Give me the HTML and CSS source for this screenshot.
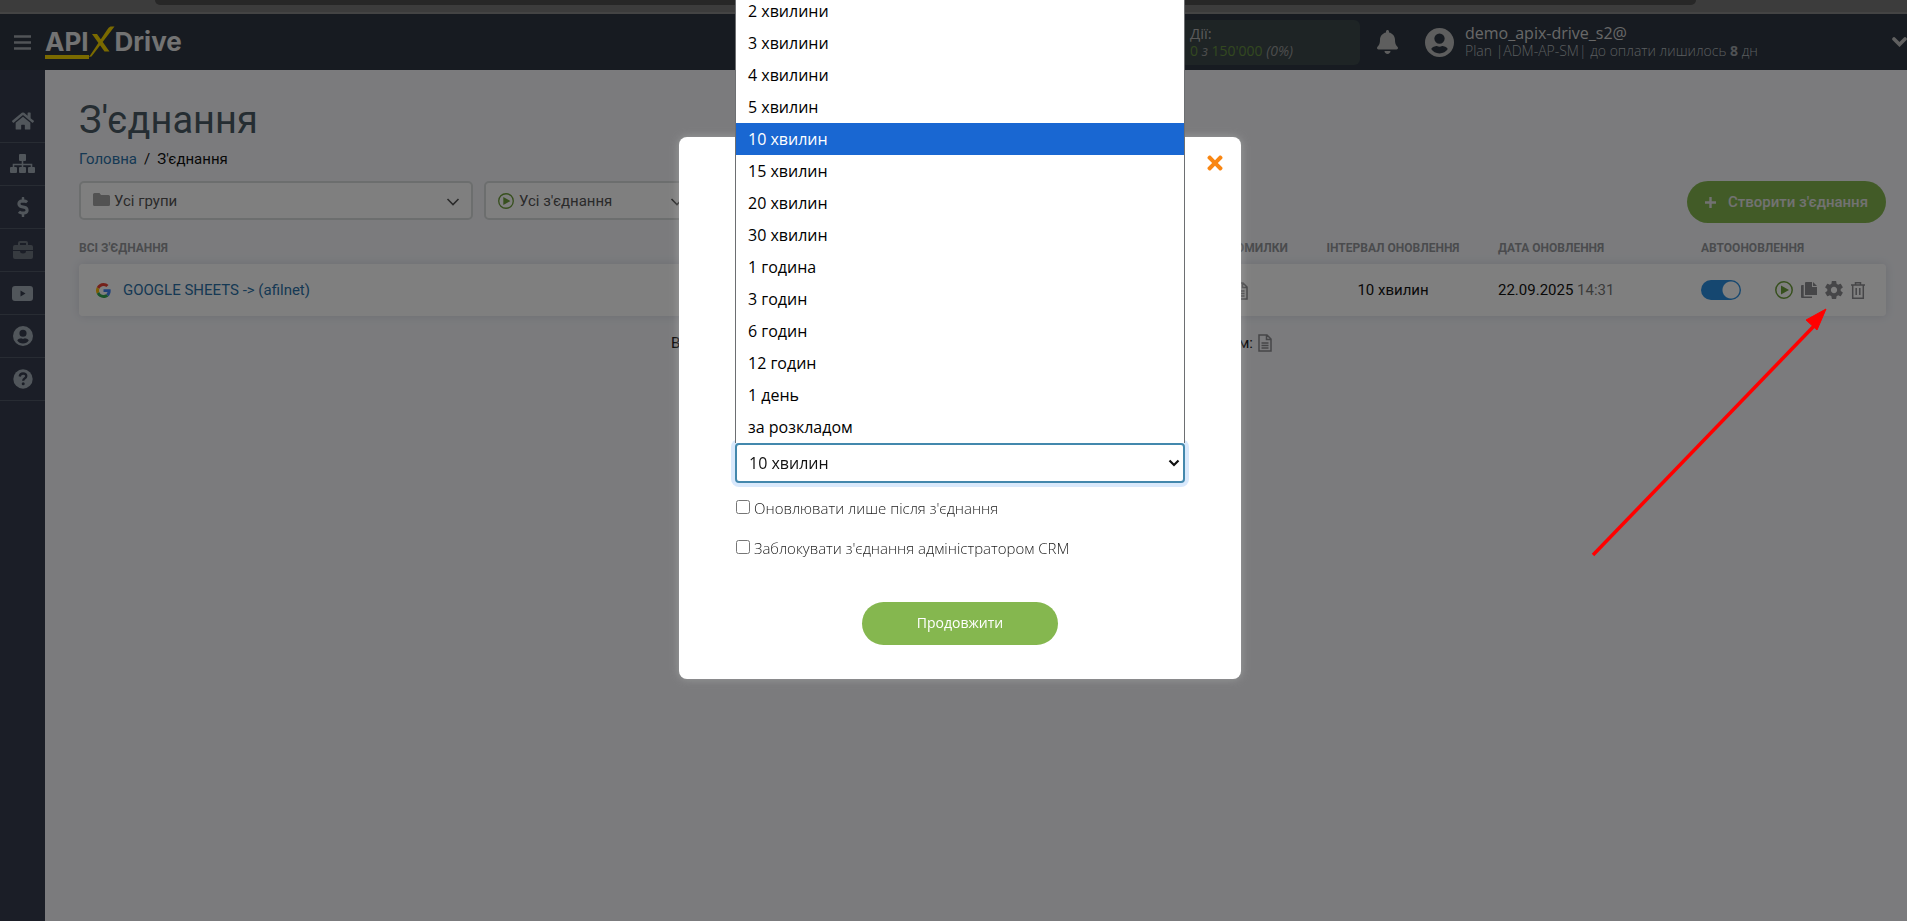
FILE: index.html
```html
<!DOCTYPE html>
<html lang="uk">
<head>
<meta charset="utf-8">
<title>З'єднання — ApiX-Drive</title>
<link rel="stylesheet" href="styles.css">
</head>
<body class="page">
<svg width="0" height="0" class="defs" aria-hidden="true">
  <symbol id="user" viewBox="0 0 28 28"><path fill-rule="evenodd" d="M14 0a14 14 0 1 1 0 28a14 14 0 1 1 0-28zM14 5.200a5 5 0 1 0 0 10a5 5 0 1 0 0-10zM14 24.500c3.600 0 6.300-1.600 8-4.200c-.6-2-4-3-5.500-3c-.8.500-1.700.700-2.500.700s-1.700-.2-2.500-.7c-1.500 0-4.900 1-5.500 3c1.700 2.600 4.400 4.200 8 4.200z"/></symbol>
  <symbol id="play" viewBox="0 0 18 18"><circle cx="9" cy="9" r="8.200" fill="none" stroke="currentColor" stroke-width="1.500"/><path d="M6 4.500l8 4.500l-8 4.500z"/></symbol>
  <symbol id="file" viewBox="0 0 14 18"><path d="M1 1h8l4 4v12h-12zM8.500 1v4.500h4.500M3.500 9h7M3.500 11.500h7M3.500 14h7" fill="none" stroke="currentColor" stroke-width="1.500"/></symbol>
  <symbol id="chev" viewBox="0 0 14 8"><path d="M1.500 1l5.500 5.500l5.500-5.500" fill="none" stroke="currentColor" stroke-width="1.600"/></symbol>
</svg>

<div class="browser-strip"><div class="address-bar"></div></div>

<header class="header">
  <button class="menu-button" type="button" aria-label="Меню">
    <svg width="17" height="15" viewBox="0 0 17 15"><path d="M0 1.500h17M0 7.500h17M0 13.500h17" stroke="currentColor" stroke-width="2.400"/></svg>
  </button>
  <a class="logo" href="#">
    <span class="logo-api">API</span>
    <svg class="logo-x" width="26" height="32" viewBox="0 0 26 32"><path d="M0 31l18-27q1.500-3 3.500-3.500h4l-23 30zM3 8h5l12.500 17.500h-5z" fill="currentColor"/></svg>
    <span class="logo-drive">Drive</span>
  </a>
  <div class="stats">
    <span class="stats-title">Дії:</span>
    <span class="stats-line"><span class="stats-num">0</span> <i>з</i> <span class="stats-num">150'000</span> <i>(0%)</i></span>
  </div>
  <button class="bell" type="button" aria-label="Сповіщення">
    <svg width="21" height="24" viewBox="0 0 448 512"><path fill="currentColor" d="M224 512c35.320 0 63.970-28.650 63.970-64H160.030c0 35.350 28.650 64 63.970 64zm215.390-149.710c-19.320-20.760-55.470-51.990-55.470-154.290 0-77.700-54.480-139.900-127.940-155.160V32c0-17.670-14.320-32-31.980-32s-31.980 14.330-31.980 32v20.840C118.560 68.100 64.080 130.300 64.080 208c0 102.300-36.150 133.530-55.470 154.290-6 6.450-8.660 14.160-8.610 21.710.11 16.400 12.980 32 32.100 32h383.800c19.120 0 32-15.600 32.100-32 .05-7.550-2.610-15.270-8.610-21.710z"/></svg>
  </button>
  <div class="account">
    <svg class="avatar" width="29" height="29" fill="currentColor"><use href="#user"/></svg>
    <div class="account-text">
      <span class="account-name">demo_apix-drive_s2@</span>
      <span class="account-plan">Plan |ADM-AP-SM| до оплати лишилось <b class="days">8</b> дн</span>
    </div>
    <svg class="account-more" width="15" height="10" viewBox="0 0 15 10"><path d="M2 2l5.500 5.500l5.500-5.500" fill="none" stroke="currentColor" stroke-width="3.600" stroke-linecap="round"/></svg>
  </div>
</header>

<div class="layout">
  <nav class="sidebar">
    <a class="side-item" href="#" aria-label="Головна"><svg width="22" height="20" viewBox="0 0 576 512"><path d="M280.370 148.260L96 300.110V464a16 16 0 0 0 16 16l112.060-.29a16 16 0 0 0 15.920-16V368a16 16 0 0 1 16-16h64a16 16 0 0 1 16 16v95.640a16 16 0 0 0 16 16.050L464 480a16 16 0 0 0 16-16V300L295.670 148.260a12.190 12.190 0 0 0-15.300 0zM571.600 251.470L488 182.560V44.050a12 12 0 0 0-12-12h-56a12 12 0 0 0-12 12v72.610L318.470 43a48 48 0 0 0-61 0L4.340 251.470a12 12 0 0 0-1.600 16.900l25.500 31A12 12 0 0 0 45.150 301l235.220-193.740a12.190 12.190 0 0 1 15.300 0L530.900 301a12 12 0 0 0 16.900-1.600l25.500-31a12 12 0 0 0-1.700-16.930z"/></svg></a>
    <a class="side-item" href="#" aria-label="З'єднання"><svg width="25" height="20" viewBox="0 0 25 20"><rect x="9" y="0" width="7" height="7" rx="1"/><rect x="0" y="13" width="7" height="6" rx="1"/><rect x="9" y="13" width="7" height="6" rx="1"/><rect x="18" y="13" width="7" height="6" rx="1"/><path d="M12.500 6v8M3.500 14v-3.500h18v3.500" fill="none" stroke="currentColor" stroke-width="1.600"/></svg></a>
    <a class="side-item" href="#" aria-label="Оплата"><svg width="12" height="20" viewBox="0 0 288 512"><path d="M209.200 233.400l-108-31.600C88.700 198.200 80 186.500 80 173.500c0-16.300 13.200-29.500 29.500-29.500h66.300c12.200 0 24.200 3.700 34.200 10.500 6.100 4.100 14.300 3.100 19.500-2l34.800-34c7.100-6.900 6.100-18.400-1.800-24.500C238 74.800 207.400 64.100 176 64V16c0-8.800-7.200-16-16-16h-32c-8.800 0-16 7.200-16 16v48h-2.500C45.800 64-5.400 118.700.5 183.600c4.200 46.100 39.400 83.600 83.800 96.600l102.500 30c12.500 3.700 21.200 15.300 21.200 28.300 0 16.300-13.200 29.500-29.500 29.500h-66.300C100 368 88 364.300 78 357.500c-6.100-4.100-14.300-3.100-19.500 2l-34.800 34c-7.100 6.900-6.100 18.400 1.800 24.500 24.500 19.200 55.100 29.900 86.500 30v48c0 8.800 7.200 16 16 16h32c8.800 0 16-7.200 16-16v-48.200c46.600-.9 90.300-28.600 105.700-72.700 21.500-61.600-14.600-124.800-72.500-141.700z"/></svg></a>
    <a class="side-item side-item-dim" href="#" aria-label="Проєкти"><svg width="20" height="18" viewBox="0 0 20 18"><path fill-rule="evenodd" d="M5 4v-2q0-2 2-2h6q2 0 2 2v2h3q2 0 2 2v3h-20v-3q0-2 2-2zM7 4h6v-2h-6zM0 10h7q0 2.500 3 2.500t3-2.500h7v6q0 2-2 2h-16q-2 0-2-2z"/></svg></a>
    <a class="side-item" href="#" aria-label="Відео"><svg width="21" height="15" viewBox="0 0 21 15"><path fill-rule="evenodd" d="M3 0h15q3 0 3 3v9q0 3-3 3h-15q-3 0-3-3v-9q0-3 3-3zM8.500 4.500v6l5-3z"/></svg></a>
    <a class="side-item" href="#" aria-label="Профіль"><svg width="20" height="20"><use href="#user"/></svg></a>
    <a class="side-item" href="#" aria-label="Допомога"><svg width="20" height="20" viewBox="0 0 20 20"><circle cx="10" cy="10" r="9.700"/><path d="M6.700 7.500q.4-3 3.400-3t3.200 2.500q0 1.400-1.700 2.400q-1.400.8-1.400 2.300" fill="none" stroke="#363d4e" stroke-width="2.300"/><circle cx="10.200" cy="14.700" r="1.500" fill="#363d4e"/></svg></a>
  </nav>

  <main class="content">
    <h1 class="title">З'єднання</h1>
    <div class="crumbs"><a class="link" href="#">Головна</a><span>/</span><span>З'єднання</span></div>

    <div class="toolbar">
      <div class="filter filter-wide">
        <svg class="filter-icon folder" width="17" height="13" viewBox="0 0 17 13"><path d="M1.500 0h5l1.500 2h7.500q1.500 0 1.500 1.500v8q0 1.500-1.500 1.500h-14q-1.500 0-1.500-1.500v-10q0-1.500 1.500-1.500z" fill="currentColor"/></svg>
        <select class="filter-select" aria-label="Група"><option>Усі групи</option></select>
        <svg class="filter-chev" width="14" height="8"><use href="#chev"/></svg>
      </div>
      <div class="filter filter-narrow">
        <svg class="filter-icon green" width="16" height="16" fill="currentColor"><use href="#play"/></svg>
        <select class="filter-select" aria-label="Стан"><option>Усі з'єднання</option></select>
        <svg class="filter-chev" width="14" height="8"><use href="#chev"/></svg>
      </div>
      <button class="create" type="button">
        <svg width="11" height="11" viewBox="0 0 11 11"><path d="M5.500 0v11M0 5.500h11" stroke="currentColor" stroke-width="2.400"/></svg>Створити з'єднання</button>
    </div>

    <table class="table">
      <thead>
        <tr><th class="c-name">Всі з'єднання</th><th class="c-errors">Помилки</th><th class="c-interval">Інтервал оновлення</th><th class="c-date">Дата оновлення</th><th class="c-auto">Автооновлення</th><th class="c-actions"></th></tr>
      </thead>
      <tbody>
        <tr class="row">
          <td><a class="link name" href="#"><svg width="15" height="15" viewBox="0 0 48 48"><path fill="#ea4335" d="M24 9.500c3.540 0 6.710 1.220 9.210 3.600l6.850-6.850C35.900 2.380 30.470 0 24 0 14.620 0 6.510 5.380 2.560 13.220l7.980 6.190C12.430 13.720 17.740 9.500 24 9.500z"/><path fill="#4285f4" d="M46.980 24.550c0-1.570-.15-3.090-.38-4.550H24v9.020h12.940c-.58 2.960-2.260 5.480-4.780 7.180l7.730 6c4.510-4.180 7.090-10.360 7.090-17.650z"/><path fill="#fbbc05" d="M10.530 28.590c-.48-1.450-.76-2.990-.76-4.590s.27-3.140.76-4.590l-7.980-6.190C.92 16.460 0 20.120 0 24c0 3.880.92 7.540 2.560 10.780l7.970-6.190z"/><path fill="#34a853" d="M24 48c6.480 0 11.930-2.130 15.890-5.810l-7.730-6c-2.150 1.450-4.920 2.300-8.160 2.300-6.260 0-11.570-4.220-13.470-9.910l-7.980 6.190C6.510 42.620 14.620 48 24 48z"/></svg>GOOGLE SHEETS -&gt; (afilnet)</a></td>
          <td class="c-log"><svg class="grey" width="14" height="18"><use href="#file"/></svg></td>
          <td class="c-interval">10 хвилин</td>
          <td>22.09.2025 <span class="time">14:31</span></td>
          <td><input class="toggle" type="checkbox" checked aria-label="Автооновлення"></td>
          <td><div class="actions">
            <button class="icon-button green" type="button" aria-label="Запустити"><svg width="18" height="18" fill="currentColor"><use href="#play"/></svg></button>
            <button class="icon-button grey" type="button" aria-label="Копіювати"><svg width="16" height="18" viewBox="0 0 16 18" fill="currentColor"><path d="M5 1h6v5h5v8h-12v-12q0-1 1-1zM12 1l4 4h-4zM1 4h1.700v11.500h8.300v1.500h-10q-1 0-1-1v-11q0-1 1-1z"/></svg></button>
            <button class="icon-button grey" type="button" aria-label="Налаштування"><svg width="18" height="18" viewBox="2 2 20 20" fill="currentColor"><path d="M19.430 12.980c.04-.32.07-.64.07-.98s-.03-.66-.07-.98l2.110-1.650c.19-.15.24-.42.12-.64l-2-3.460c-.12-.22-.39-.3-.61-.22l-2.490 1c-.52-.4-1.080-.73-1.690-.98l-.38-2.650C14.460 2.180 14.250 2 14 2h-4c-.25 0-.46.180-.49.420l-.38 2.650c-.61.250-1.170.590-1.690.980l-2.490-1c-.23-.09-.49 0-.61.220l-2 3.460c-.13.220-.07.490.120.640l2.110 1.650c-.04.320-.07.650-.07.980s.03.660.07.980l-2.110 1.650c-.19.150-.24.420-.12.640l2 3.460c.12.220.39.300.61.220l2.490-1c.52.400 1.080.730 1.690.980l.38 2.650c.03.240.24.420.49.420h4c.25 0 .46-.18.490-.42l.38-2.650c.61-.25 1.170-.59 1.690-.98l2.490 1c.23.090.49 0 .61-.22l2-3.460c.12-.22.070-.49-.12-.64l-2.110-1.650zM12 15.500c-1.930 0-3.500-1.570-3.500-3.500s1.570-3.500 3.500-3.500 3.500 1.570 3.500 3.500-1.570 3.500-3.500 3.500z"/></svg></button>
            <button class="icon-button grey" type="button" aria-label="Видалити"><svg width="14" height="17" viewBox="0 0 14 17" fill="none" stroke="currentColor" stroke-width="1.500"><path d="M0 3h14M4.500 3v-2.200h5v2.200M1.700 3v13.200h10.600v-13.200M5.200 6v7M8.800 6v7"/></svg></button>
          </div></td>
        </tr>
      </tbody>
    </table>

    <p class="footnote"><span>Всього</span><span class="footnote-end">загальним логом: <svg class="grey" width="14" height="18"><use href="#file"/></svg></span></p>
  </main>
</div>

<div class="overlay">
  <form class="modal">
    <button class="close" type="button" aria-label="Закрити"><svg width="16" height="22" viewBox="0 0 352 512"><path fill="currentColor" d="M242.720 256l100.070-100.070c12.280-12.280 12.280-32.190 0-44.480l-22.240-22.240c-12.280-12.280-32.190-12.280-44.480 0L176 189.280 75.930 89.210c-12.280-12.280-32.190-12.280-44.480 0L9.210 111.450c-12.280 12.280-12.280 32.190 0 44.480L109.280 256 9.210 356.070c-12.280 12.280-12.280 32.190 0 44.480l22.240 22.240c12.280 12.280 32.200 12.280 44.480 0L176 322.720l100.070 100.070c12.280 12.280 32.200 12.280 44.480 0l22.240-22.240c12.280-12.280 12.280-32.190 0-44.480L242.720 256z"/></svg></button>
    <div class="interval">
      <ul class="options">
        <li class="option">2 хвилини</li><li class="option">3 хвилини</li><li class="option">4 хвилини</li><li class="option">5 хвилин</li>
        <li class="option option-active">10 хвилин</li><li class="option">15 хвилин</li><li class="option">20 хвилин</li><li class="option">30 хвилин</li>
        <li class="option">1 година</li><li class="option">3 годин</li><li class="option">6 годин</li><li class="option">12 годин</li>
        <li class="option">1 день</li><li class="option">за розкладом</li>
      </ul>
      <select class="interval-select" aria-label="Інтервал оновлення"><option>10 хвилин</option></select>
      <svg class="interval-chev" width="12" height="8" viewBox="0 0 12 8"><path d="M1.500 1.500l4.500 4.500l4.500-4.500" fill="none" stroke="currentColor" stroke-width="2.200"/></svg>
    </div>
    <label class="check"><input class="check-box" type="checkbox">Оновлювати лише після з'єднання</label>
    <label class="check"><input class="check-box" type="checkbox">Заблокувати з'єднання адміністратором CRM</label>
    <button class="submit" type="submit">Продовжити</button>
  </form>
</div>

<svg class="arrow" width="240" height="254" viewBox="0 0 240 254" aria-hidden="true"><path d="M5 249L226 20" stroke="#f00" stroke-width="3.500"/><path d="M238 3L218 14l11 10z" fill="#f00" stroke="#f00"/></svg>
</body>
</html>
```
FILE: styles.css
```css
* { box-sizing: border-box; }
.page {
  margin: 0;
  min-height: 100vh;
  display: flex;
  flex-direction: column;
  overflow: hidden;
  background: #f6f7fb;
  font-family: Roboto, "Open Sans", sans-serif;
  font-size: 15px;
  color: #111;
}
.defs { position: absolute; }
button, select, input { font: inherit; }
button { border: 0; padding: 0; background: none; }
svg { flex: none; }

.browser-strip { height: 14px; padding: 0 211px 0 155px; background: #787878; border-bottom: 2px solid #888; }
.address-bar { height: 5px; background: #4e4e4e; border-radius: 0 0 16px 16px; }

.header {
  display: flex;
  align-items: center;
  height: 56px;
  padding-left: 14px;
  background: #2e3742;
  color: #d0d0d0;
  font-family: "Open Sans", "Noto Sans", sans-serif;
}
.menu-button { display: flex; color: #a2a8ae; }
.logo {
  display: flex;
  align-items: center;
  margin-left: 14px;
  margin-right: auto;
  color: #e6e6e6;
  font: 700 26px/24px Inter, sans-serif;
  text-decoration: none;
}
.logo-api { border-bottom: 4px solid #f5d400; margin-top: 4px; padding-bottom: 1px; }
.logo-x { color: #f5d400; }
.logo-drive { margin-top: -1px; }
.stats {
  display: flex;
  flex-direction: column;
  width: 180px;
  padding: 3px 10px;
  height: 45px;
  background: #3c494b;
  border-radius: 6px;
  color: #b4b4b4;
  line-height: 20px;
}
.stats-title { font-size: 15px; }
.stats-line { font-size: 14px; line-height: 16px; color: #999; }
.stats-num { color: #67913f; }
.bell { display: flex; margin: 0 27px 0 17px; color: #bcbcbc; }
.account { display: flex; align-items: center; width: 482px; }
.avatar { color: #bcbcbc; margin-right: 11px; }
.account-text { display: flex; flex-direction: column; line-height: 18px; }
.account-name { font-size: 16px; }
.account-plan { font-size: 14px; font-weight: 300; color: #b4b9be; }
.days { font-weight: 700; color: #a0a5aa; }
.account-more { margin-left: auto; color: #c0c0c0; }

.layout { display: flex; flex: 1; }
.sidebar { width: 45px; padding-top: 30px; background: #363d4e; }
.side-item {
  display: flex;
  align-items: center;
  justify-content: center;
  height: 43px;
  border-bottom: 1px solid #515867;
  color: #a2acb6;
  fill: currentColor;
}
.side-item-dim { color: #6f7680; }
.content { flex: 1; padding: 28px 21px 0 34px; }
.title { margin: 0; font-size: 38px; line-height: 44px; font-weight: 400; color: #4a5a64; }
.crumbs { display: flex; gap: 7px; margin-top: 7px; line-height: 20px; }
.link { color: #2c72a8; text-decoration: none; }

.toolbar { display: flex; align-items: flex-start; gap: 11px; margin-top: 12px; }
.filter { position: relative; }
.filter-wide { width: 394px; }
.filter-narrow { width: 213px; }
.filter-select {
  width: 100%;
  height: 39px;
  padding: 0 33px;
  border: 2px solid #d9dcdc;
  border-radius: 5px;
  background: #fff;
  color: #555;
  appearance: none;
}
.filter-icon { position: absolute; left: 14px; top: 12px; }
.filter-chev { position: absolute; right: 13px; top: 17px; color: #555; }
.folder { color: #a4a4a4; }
.green { color: #6fa03c; }
.grey { color: #8c8c90; }
.create {
  display: flex;
  align-items: center;
  gap: 12px;
  height: 42px;
  margin-left: auto;
  padding: 0 18px;
  border-radius: 21px;
  background: #85b74f;
  color: #e4e4e4;
  font-weight: 500;
}

.table { width: 100%; margin-top: 9px; border-spacing: 0; table-layout: fixed; }
.table th { height: 32px; padding: 0; text-align: left; font-size: 12px; font-weight: 700; text-transform: uppercase; color: #95979b; }
.table td { height: 52px; padding: 0; background: #fff; }
.table .c-errors { width: 94px; text-align: right; }
.table .c-interval { width: 210px; text-align: center; }
.table .c-date { width: 203px; }
.table .c-auto { width: 74px; white-space: nowrap; }
.table .c-actions { width: 111px; }
.c-log { text-align: center; }
.row { box-shadow: 0 0 10px #d8dae4; border-radius: 4px; }
.table .row td:first-child { border-radius: 4px 0 0 4px; }
.table .row td:last-child { border-radius: 0 4px 4px 0; }
.c-log svg { display: inline-block; vertical-align: middle; }
.name { display: flex; align-items: center; gap: 12px; padding-left: 17px; }
.time { color: #777; }
.toggle {
  display: block;
  appearance: none;
  width: 40px;
  height: 20px;
  margin: 0;
  border-radius: 10px;
  background: radial-gradient(circle at 30px 10px, #fff 8px, #2a8fe0 9px);
}
.actions { display: flex; align-items: center; justify-content: space-between; width: 90px; }
.icon-button { display: flex; }
.footnote { display: flex; justify-content: space-between; width: 601px; margin: 17px 0 0 592px; line-height: 20px; }
.footnote-end { display: flex; align-items: center; gap: 5px; }

.overlay {
  position: fixed;
  inset: 0;
  display: flex;
  align-items: flex-start;
  justify-content: center;
  padding: 137px 0 0 13px;
  background: rgba(0, 0, 0, 0.5);
  font-family: "Open Sans", "Noto Sans", sans-serif;
}
.modal {
  position: relative;
  display: flex;
  flex-direction: column;
  width: 562px;
  padding: 306px 56px 34px;
  border-radius: 8px;
  background: #fff;
  box-shadow: 0 0 8px rgba(190, 190, 190, 0.5);
}
.close { position: absolute; top: 15px; right: 18px; color: #f98612; }
.close svg { display: block; }
.interval { position: relative; font-size: 16px; color: #111; }
.interval-select {
  display: block;
  width: 100%;
  height: 40px;
  padding: 0 12px;
  border: 2px solid #4388ad;
  border-radius: 4px;
  background: #fff;
  color: #111;
  box-shadow: 0 0 0 4px #d9e9fc;
  appearance: none;
}
.interval-chev { position: absolute; right: 5px; top: 16px; }
.options {
  position: absolute;
  left: 0;
  right: 0;
  bottom: 100%;
  margin: 0;
  padding: 0;
  list-style: none;
  background: #fff;
  border: 1px solid #6d6f72;
  border-bottom: 0;
  color: #000;
}
.option { height: 32px; padding: 0 12px; line-height: 32px; }
.option-active { background: #1967d2; color: #fff; }
.check { display: flex; align-items: center; gap: 4px; height: 20px; margin-top: 15px; font-size: 15px; font-weight: 300; color: #222; }
.check + .check { margin-top: 20px; }
.check-box { width: 14px; height: 14px; margin: 0 0 2px 1px; }
.submit {
  align-self: center;
  width: 196px;
  height: 43px;
  margin-top: 44px;
  padding-bottom: 2px;
  border-radius: 22px;
  background: #85b74f;
  color: #fff;
  font-size: 14px;
}
.arrow { position: absolute; top: 306px; right: 79px; }
```
